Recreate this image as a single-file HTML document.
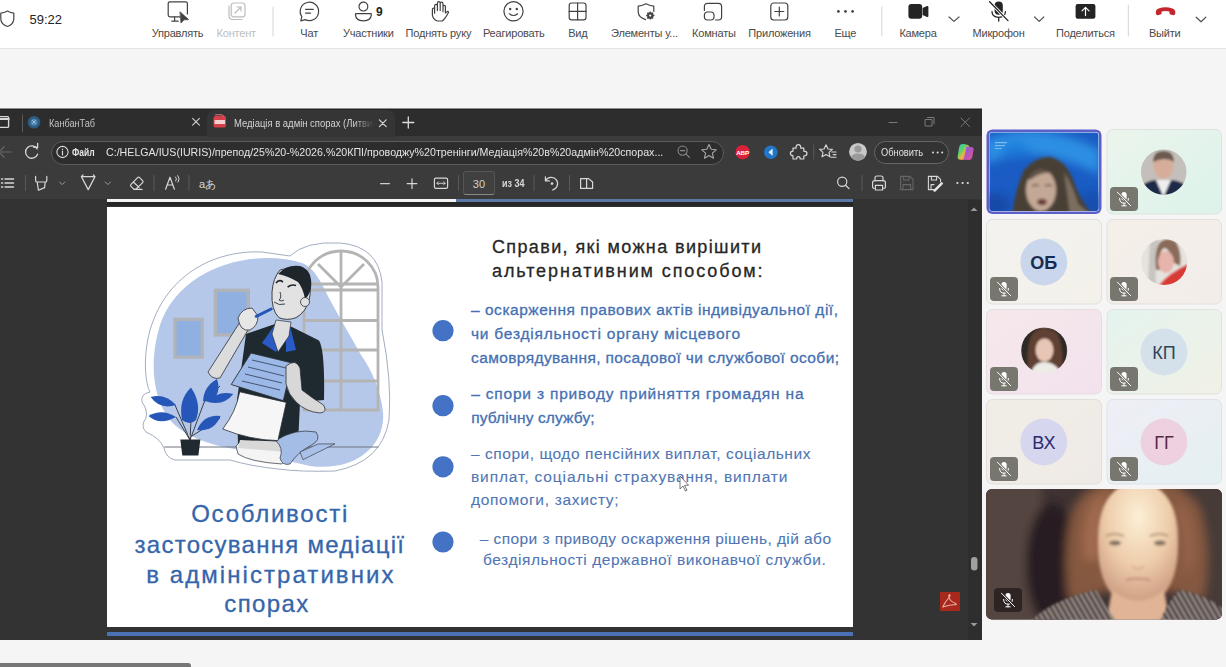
<!DOCTYPE html>
<html><head><meta charset="utf-8">
<style>
*{box-sizing:border-box}
html,body{margin:0;padding:0}
body{width:1226px;height:667px;overflow:hidden;background:#f5f5f5;position:relative;font-family:"Liberation Sans",sans-serif}
.a{position:absolute}
#top{left:0;top:0;width:1226px;height:49px;background:#fff;border-bottom:1px solid #e3e3e3}
.lbl{position:absolute;top:27px;width:120px;text-align:center;font-size:11px;letter-spacing:-0.2px;color:#4a4a4a;white-space:nowrap;line-height:13px}
.ico{position:absolute}
.sep{position:absolute;top:7px;width:1px;height:33px;background:#d6d6d6}
#win{left:0;top:108px;width:982px;height:532px;background:#333333;overflow:hidden}
#tabs{left:0;top:0;width:982px;height:28px;background:#2d2d2d}
#addr{left:0;top:28px;width:982px;height:31px;background:#3b3b3b}
#pdft{left:0;top:59px;width:982px;height:32px;background:#3b3b3b}
.wt{color:#e6e6e6}
#slide{left:107px;top:99px;width:746px;height:420px;background:#fff;overflow:hidden}
.tile{position:absolute;width:115px;height:85px;border-radius:6px;border:1px solid #e0e0e0;overflow:hidden}
.mic{position:absolute;left:3px;bottom:3px;width:28px;height:24px;border-radius:4px;background:#78786f}
.init{position:absolute;width:48px;height:48px;border-radius:50%;left:33px;top:18px;text-align:center;line-height:48px;font-size:19px;font-weight:bold}
</style></head>
<body>
<!-- TOP TEAMS BAR -->
<div id="top" class="a">
<svg class="a" style="left:0;top:0" width="1226" height="48" viewBox="0 0 1226 48" fill="none" stroke="#424242" stroke-width="1.2" stroke-linecap="round" stroke-linejoin="round">
 <!-- shield -->
 <path d="M7.5 11 Q4 13 0.8 13.2 V19 Q1 24.5 7.5 26.5 Q13.5 24.5 13.8 19 V13.2 Q10.5 13 7.5 11Z"/>
 <!-- manage: monitor + cursor -->
 <path d="M180 16.8 H170 Q168.2 16.8 168.2 15 V3.6 Q168.2 1.8 170 1.8 H185.6 Q187.4 1.8 187.4 3.6 V14"/>
 <path d="M174.6 17 V21 M171.8 21.2 H178.2"/>
 <path d="M180.2 12 L188.6 19.6 L184 19.8 L181.2 22.8 Z" fill="#424242" stroke-width="0.8"/>
 <!-- content (disabled) -->
 <g stroke="#bdbdbd">
 <rect x="231.2" y="3" width="13.8" height="13.8" rx="2.5"/>
 <path d="M229 6 V15.5 Q229 19.5 233 19.5 H242"/>
 <path d="M235 13 L241 7 M237 7 H241 V11"/>
 </g>
 <!-- separators -->
 <path d="M273 7 V36" stroke="#dcdcdc"/>
 <path d="M881.8 7 V36" stroke="#dcdcdc"/>
 <path d="M1128.4 5 V36" stroke="#dcdcdc"/>
 <!-- chat -->
 <path d="M300.8 20.8 L301.8 16.6 A9.2 9.2 0 1 1 305.2 19.6 Z"/>
 <path d="M305.6 9.4 H313.2 M305.6 13.2 H310.6"/>
 <!-- participants -->
 <circle cx="363.4" cy="6.6" r="4.4"/>
 <path d="M356 13.6 H370.8 Q371.4 13.6 371.4 14.4 Q371 20.8 363.4 20.8 Q355.8 20.8 355.4 14.4 Q355.4 13.6 356 13.6Z"/>
 <!-- hand -->
 <path d="M434.6 13.2 V6 Q434.6 4.4 436 4.4 Q437.4 4.4 437.4 6 V10.6 V3.2 Q437.4 1.6 438.8 1.6 Q440.2 1.6 440.2 3.2 V10.4 V3.8 Q440.2 2.2 441.6 2.2 Q443 2.2 443 3.8 V11.6 V6.8 Q443 5.4 444.2 5.4 Q445.4 5.4 445.4 6.8 V13 L447.2 11.6 Q448.4 11 448.6 12.2 Q445 19 442.2 21 H437.2 Q433 19.4 432.4 15.2 V9.6 Q432.4 8.2 433.5 8.2 Q434.6 8.2 434.6 9.6"/>
 <!-- smiley -->
 <circle cx="513.5" cy="11.3" r="9.6"/>
 <circle cx="510.2" cy="9" r="0.6" fill="#424242"/><circle cx="516.8" cy="9" r="0.6" fill="#424242"/>
 <path d="M509.4 13.8 Q513.5 17.2 517.6 13.8"/>
 <!-- view grid -->
 <rect x="569.2" y="3" width="16.8" height="16.8" rx="2.4"/>
 <path d="M577.6 3 V19.8 M569.2 11.4 H586"/>
 <!-- shield gear -->
 <path d="M646 3.8 Q641.5 6 638.2 6.2 V12 Q638.4 17.4 645.6 19.6 M653.8 11.5 V6.2 Q650.5 6 646 3.8"/>
 <path d="M654.20 15.60 L652.88 16.71 L653.03 18.43 L651.31 18.28 L650.20 19.60 L649.09 18.28 L647.37 18.43 L647.52 16.71 L646.20 15.60 L647.52 14.49 L647.37 12.77 L649.09 12.92 L650.20 11.60 L651.31 12.92 L653.03 12.77 L652.88 14.49Z" fill="#424242" stroke="#424242" stroke-width="0.6"/><circle cx="650.2" cy="15.6" r="1.1" fill="#fff" stroke="none"/>
 <!-- rooms -->
 <path d="M708.5 3.4 H718.4 Q721.6 3.4 721.6 6.6 V16.8 Q721.6 20 718.4 20 H715.6"/>
 <rect x="704.4" y="12" width="9.6" height="8" rx="3.2"/>
 <path d="M704.4 10.4 V6.6 Q704.4 3.4 707.6 3.4"/>
 <!-- apps -->
 <rect x="770.8" y="3" width="17" height="17" rx="3"/>
 <path d="M779.3 7 V16 M774.8 11.5 H783.8"/>
 <!-- more -->
 <circle cx="838.4" cy="11.4" r="1.35" fill="#424242" stroke="none"/><circle cx="845.5" cy="11.4" r="1.35" fill="#424242" stroke="none"/><circle cx="852.6" cy="11.4" r="1.35" fill="#424242" stroke="none"/>
 <!-- camera -->
 <rect x="908.4" y="4" width="13.8" height="14.8" rx="3" fill="#242424" stroke="none"/>
 <path d="M922.6 8 L927 6 Q928.4 5.6 928.4 7 V16 Q928.4 17.4 927 16.9 L922.6 15Z" fill="#242424" stroke="none"/>
 <path d="M949 17 L954 21.4 L959 17" stroke="#555"/>
 <!-- mic -->
 <rect x="994.6" y="1.4" width="8.2" height="13.4" rx="4.1" fill="#242424" stroke="none"/>
 <path d="M992 11.6 Q992 17.4 998.7 17.4 Q1005.4 17.4 1005.4 11.6 M998.7 17.4 V21" stroke="#242424" stroke-width="1.3"/>
 <path d="M989.6 1.8 L1008 20.6" stroke="#fff" stroke-width="3"/>
 <path d="M989.6 1.8 L1008 20.6" stroke="#242424" stroke-width="1.3"/>
 <path d="M1034.6 17 L1039.2 21.4 L1043.8 17" stroke="#555"/>
 <!-- share -->
 <rect x="1075.6" y="4" width="19.8" height="14.8" rx="2.2" fill="#242424" stroke="none"/>
 <path d="M1085.5 15.6 V7.6 M1082 10.8 L1085.5 7.3 L1089 10.8" stroke="#fff" stroke-width="1.2"/>
 <!-- hangup -->
 <path d="M1156 13.8 Q1155 10 1158.6 8.6 Q1165.5 6 1172.4 8.6 Q1176 10 1175.2 13.8 Q1174.8 15.4 1173.2 15.2 L1170.6 14.6 Q1169.4 14.2 1169.4 12.8 V11.4 Q1165.5 10.4 1161.6 11.4 V12.8 Q1161.6 14.2 1160.4 14.6 L1157.8 15.2 Q1156.2 15.4 1156 13.8Z" fill="#c4262e" stroke="none"/>
 <path d="M1196.2 17.2 L1201 21.8 L1205.8 17.2" stroke="#555"/>
</svg>
<div class="a" style="left:29.5px;top:12px;font-size:13px;color:#242424;line-height:15px">59:22</div>
<div class="a" style="left:376px;top:5px;font-size:12px;font-weight:bold;color:#242424;line-height:14px">9</div>
<div class="lbl" style="left:117.5px">Управлять</div>
<div class="lbl" style="left:176.3px;color:#bdbdbd">Контент</div>
<div class="lbl" style="left:249.2px">Чат</div>
<div class="lbl" style="left:308.3px">Участники</div>
<div class="lbl" style="left:378.4px">Поднять руку</div>
<div class="lbl" style="left:453.8px">Реагировать</div>
<div class="lbl" style="left:517.8px">Вид</div>
<div class="lbl" style="left:584.5px">Элементы у...</div>
<div class="lbl" style="left:653.9px">Комнаты</div>
<div class="lbl" style="left:719.5px">Приложения</div>
<div class="lbl" style="left:785.4px">Еще</div>
<div class="lbl" style="left:858px">Камера</div>
<div class="lbl" style="left:938.6px">Микрофон</div>
<div class="lbl" style="left:1025.4px">Поделиться</div>
<div class="lbl" style="left:1104.7px">Выйти</div>
</div>

<!-- BROWSER WINDOW -->
<div id="win" class="a">
  <div id="tabs" class="a"></div>
  <div class="a" style="left:0;top:0;width:982px;height:1px;background:#8c8c8c"></div>
  <div class="a" style="left:0;top:1px;width:982px;height:1px;background:#232323"></div>
  <div id="addr" class="a"></div>
  <div id="pdft" class="a"></div>
  <div class="a" style="left:207px;top:2px;width:188px;height:27px;background:#353535;border-radius:8px 8px 0 0"></div>
  <!-- address pill -->
  <div class="a" style="left:50.5px;top:32.5px;width:673px;height:24px;border:1px solid #5c5c5c;border-radius:12px;background:#2d2d2d"></div>
  <div class="a" style="left:873.5px;top:33.3px;width:75px;height:22.5px;border:1px solid #666;border-radius:12px;background:#333"></div>
  <!-- page number box -->
  <div class="a" style="left:463px;top:63px;width:32px;height:24px;background:#404040;border:1px solid #555;border-bottom:1px solid #8a8a8a;border-radius:3px"></div>
  <svg class="a" style="left:0;top:0" width="982" height="100" viewBox="0 0 982 100" fill="none" stroke="#d0d0d0" stroke-width="1.2" stroke-linecap="round" stroke-linejoin="round">
   <!-- tab actions -->
   <rect x="-1" y="8.6" width="9.6" height="10.8" rx="1.2" stroke="#d8d8d8" stroke-width="1.4"/>
   <path d="M-1 11 H8.6" stroke="#d8d8d8" stroke-width="2.2"/>
   <path d="M22.5 7 V24" stroke="#5a5a5a" stroke-width="1"/>
   <circle cx="34" cy="14.2" r="6.3" fill="#2f5b7e" stroke="none"/>
   <circle cx="34" cy="14.2" r="3.5" fill="#4c86b0" stroke="none"/>
   <path d="M32.5 12.5 L35.5 15.5 M35.5 12.5 L32.5 15.5" stroke="#aac4dc" stroke-width="0.9"/>
   <path d="M192.6 10.4 L199.4 17.2 M199.4 10.4 L192.6 17.2" stroke="#cfcfcf" stroke-width="1.1"/>
   <!-- pdf icon -->
   <rect x="213.5" y="8" width="12.5" height="11.5" rx="2" fill="#d6404a" stroke="none"/>
   <rect x="214.5" y="12" width="10.5" height="4" fill="#f4d0d2" stroke="none"/>
   <path d="M215.5 6.8 H222 L224 8.5" stroke="#e87880" stroke-width="1"/>
   <path d="M379.4 11.8 L386.2 18.6 M386.2 11.8 L379.4 18.6" stroke="#d8d8d8" stroke-width="1.2"/>
   <path d="M408.3 9 V20 M402.8 14.5 H413.8" stroke="#dcdcdc" stroke-width="1.3"/>
   <!-- window controls -->
   <path d="M889 14.5 H897" stroke="#7a7a7a" stroke-width="1"/>
   <rect x="925.5" y="11.5" width="6.5" height="6.5" stroke="#7a7a7a" stroke-width="1"/>
   <path d="M927.5 9.5 H934 V16" stroke="#7a7a7a" stroke-width="1"/>
   <path d="M961 10 L969.5 18.5 M969.5 10 L961 18.5" stroke="#7a7a7a" stroke-width="1"/>
   <!-- back / reload -->
   <path d="M1 44 H11 M-1 44 L4 39 M-1 44 L4 49" stroke="#6a6a6a" stroke-width="1.2"/>
   <path d="M37.2 41 A6.2 6.2 0 1 0 37.6 46.2" stroke="#d8d8d8" stroke-width="1.3"/>
   <path d="M33.6 39.2 L37.6 39.4 L37.6 35.4" stroke="#d8d8d8" stroke-width="1.3"/>
   <!-- info -->
   <circle cx="62.5" cy="44" r="5.6" stroke="#d8d8d8" stroke-width="1.1"/>
   <path d="M62.5 43 V47" stroke="#d8d8d8" stroke-width="1.2"/>
   <circle cx="62.5" cy="41.2" r="0.7" fill="#d8d8d8" stroke="none"/>
   <!-- zoom -->
   <circle cx="682.6" cy="42.6" r="4.6" stroke="#8a8a8a" stroke-width="1.1"/>
   <path d="M685.9 45.9 L689.4 49.4 M680.4 42.6 H684.8" stroke="#8a8a8a" stroke-width="1.1"/>
   <!-- star -->
   <path d="M709 36.6 L711.2 41.3 L716.2 41.8 L712.4 45.2 L713.5 50.2 L709 47.6 L704.5 50.2 L705.6 45.2 L701.8 41.8 L706.8 41.3Z" stroke="#a8a8a8" stroke-width="1.1"/>
   <!-- ABP -->
   <circle cx="742.7" cy="44.2" r="7.2" fill="#d9213b" stroke="none"/>
   <text x="742.7" y="46.6" font-size="6.2" font-weight="bold" fill="#fff" stroke="none" text-anchor="middle" font-family="Liberation Sans">ABP</text>
   <!-- blue ext -->
   <circle cx="770.8" cy="44.2" r="6.8" fill="#2276c8" stroke="none"/>
   <path d="M772.6 40.6 L768.4 44.2 L772.6 47.8Z" fill="#e8f2fc" stroke="none"/>
   <!-- puzzle -->
   <path d="M793 40.2 H796 Q796 36.6 798.4 36.6 Q800.8 36.6 800.8 40.2 H803.8 V43.2 Q807 43.2 807 45.6 Q807 48 803.8 48 V51 H800.2 Q800.2 48.6 798.4 48.6 Q796.6 48.6 796.6 51 H793 V47.6 Q790.4 47.6 790.4 45.4 Q790.4 43.2 793 43.2Z" stroke="#d8d8d8" stroke-width="1.2"/>
   <path d="M813.8 37 V51" stroke="#5a5a5a" stroke-width="1"/>
   <!-- fav list -->
   <path d="M826 36.8 L828 41 L832.4 41.4 L829 44.4 L830 48.8 L826 46.5 L822 48.8 L823 44.4 L819.6 41.4 L824 41Z" stroke="#d8d8d8" stroke-width="1.1"/>
   <path d="M831.8 44 H836 M833.2 46.6 H836 M831 49.2 H836" stroke="#d8d8d8" stroke-width="1.1"/>
   <!-- avatar -->
   <circle cx="858" cy="43.8" r="8.9" fill="#c9c9c9" stroke="none"/>
   <circle cx="858" cy="41" r="3.6" fill="#9a9a9a" stroke="none"/>
   <path d="M851 49.5 Q852 45.6 858 45.6 Q864 45.6 865 49.5 Q862 52.6 858 52.6 Q854 52.6 851 49.5Z" fill="#9a9a9a" stroke="none"/>
   <circle cx="933" cy="44.5" r="1" fill="#e0e0e0" stroke="none"/><circle cx="937.6" cy="44.5" r="1" fill="#e0e0e0" stroke="none"/><circle cx="942.2" cy="44.5" r="1" fill="#e0e0e0" stroke="none"/>
   <!-- copilot -->
   <defs><linearGradient id="cpg" x1="0" y1="0" x2="1" y2="1"><stop offset="0" stop-color="#3ec1f2"/><stop offset="0.35" stop-color="#55d36c"/><stop offset="0.6" stop-color="#f2b33d"/><stop offset="1" stop-color="#e040a0"/></linearGradient>
   <linearGradient id="cpg2" x1="0" y1="0" x2="1" y2="1"><stop offset="0" stop-color="#7a5cf0"/><stop offset="1" stop-color="#f0508a"/></linearGradient></defs>
   <path d="M960 37 Q962 35.6 964 36 L968 37 Q969.6 37.6 969 39.4 L965.4 50 Q964.6 52 962.6 52 L959 51.4 Q957 50.8 957.6 48.6 L959 40Z" fill="url(#cpg)" stroke="none"/>
   <path d="M966.6 38.4 L971.8 39 Q974 39.4 973.6 41.8 L972.2 49.6 Q971.6 52 969.4 52 L963.6 51.8Z" fill="url(#cpg2)" stroke="none"/>
   <!-- pdf toolbar icons row (cy 75) -->
   <path d="M1.6 71 H2.6 M1.6 75 H2.6 M1.6 79 H2.6" stroke="#d8d8d8" stroke-width="1.6"/>
   <path d="M5 71 H13.6 M5 75 H13.6 M5 79 H13.6" stroke="#d8d8d8" stroke-width="1.3"/>
   <path d="M25.4 67.5 V82.5" stroke="#5a5a5a" stroke-width="1"/>
   <path d="M35.6 68.4 V72.4 Q35.6 74 37.2 74 H45.2 Q46.8 74 46.8 72.4 V68.4 M37.2 74 L38.4 82.2 L44.6 79.6 L45.2 74" stroke="#d8d8d8" stroke-width="1.2"/>
   <path d="M59.6 74 L62.2 76.6 L64.8 74" stroke="#9a9a9a" stroke-width="1"/>
   <path d="M81.4 68.6 H95 L88.2 81.6Z M81.4 68.6 L83 66.8 M95 68.6 L93.4 66.8" stroke="#d8d8d8" stroke-width="1.2"/>
   <path d="M105.2 74 L107.8 76.6 L110.4 74" stroke="#9a9a9a" stroke-width="1"/>
   <path d="M131 76.4 L137.6 69.6 Q138.6 68.6 139.6 69.6 L142.6 72.6 Q143.6 73.6 142.6 74.6 L136 81.2 H133.8 L131 78.4 Q130 77.4 131 76.4Z M133.4 74 L139 79.4 M133.8 81.4 H142" stroke="#d8d8d8" stroke-width="1.2"/>
   <path d="M154 67.5 V82.5" stroke="#5a5a5a" stroke-width="1"/>
   <path d="M165.6 81.2 L170 69.2 L174.4 81.2 M167.2 77 H172.8" stroke="#d8d8d8" stroke-width="1.2"/>
   <path d="M175.6 69 Q177.4 70.6 175.8 73 M177.8 67.6 Q180.6 70.6 178 74.2" stroke="#d8d8d8" stroke-width="1"/>
   <path d="M189 67.5 V82.5" stroke="#5a5a5a" stroke-width="1"/>
   <text x="199" y="79.6" font-size="11" fill="#d8d8d8" stroke="none" font-family="Liberation Sans">aあ</text>
   <!-- zoom controls -->
   <path d="M380.6 75.6 H389.4" stroke="#cfcfcf" stroke-width="1.2"/>
   <path d="M412 70.8 V80.4 M407.2 75.6 H416.8" stroke="#d8d8d8" stroke-width="1.2"/>
   <rect x="434.4" y="70.2" width="13.2" height="10.2" rx="1.6" stroke="#d8d8d8" stroke-width="1.2"/>
   <path d="M437 75.3 H445 M438.4 73.8 L437 75.3 L438.4 76.8 M443.6 73.8 L445 75.3 L443.6 76.8" stroke="#d8d8d8" stroke-width="0.9"/>
   <path d="M458.6 67.5 V82.5" stroke="#5a5a5a" stroke-width="1"/>
   <path d="M534 67.5 V82.5" stroke="#5a5a5a" stroke-width="1"/>
   <path d="M545.6 72.6 A6.4 6.4 0 1 1 552.4 82" stroke="#d8d8d8" stroke-width="1.2"/>
   <path d="M545.4 68.8 V72.8 H549.4" stroke="#d8d8d8" stroke-width="1.2"/>
   <circle cx="552" cy="75.6" r="1.3" fill="#d8d8d8" stroke="none"/>
   <path d="M569.5 67.5 V82.5" stroke="#5a5a5a" stroke-width="1"/>
   <path d="M580.6 70.6 H588.6 L592.6 74 V80.4 H580.6Z M586.6 70.6 V80.4" stroke="#d8d8d8" stroke-width="1.2"/>
   <!-- right pdf icons -->
   <circle cx="842.2" cy="73.8" r="4.6" stroke="#d8d8d8" stroke-width="1.2"/>
   <path d="M845.6 77.2 L849 80.6" stroke="#d8d8d8" stroke-width="1.3"/>
   <path d="M862 67.5 V82.5" stroke="#5a5a5a" stroke-width="1"/>
   <path d="M875 73 V70 Q875 68 877 68 H881 Q883 68 883 70 V73 M874 80.4 Q872.6 80.4 872.6 79 V74.6 Q872.6 72.6 874.6 72.6 H883.4 Q885.4 72.6 885.4 74.6 V79 Q885.4 80.4 884 80.4 M875.4 77.4 H882.6 V82 H875.4Z" stroke="#d8d8d8" stroke-width="1.2"/>
   <path d="M900.6 68.4 H910 L913 71.4 V81.6 H900.6Z M903.6 68.4 V72 H909 V68.4 M903 81.6 V76.6 H910.6 V81.6" stroke="#666" stroke-width="1.1"/>
   <path d="M936 81.6 H928.4 V68.4 H937.6 L940.6 71.4 V74 M931.4 68.4 V72 H936.6 V68.4 M931 81.6 V76.6 H934" stroke="#d8d8d8" stroke-width="1.1"/>
   <path d="M934.6 82.6 L941.8 75.4" stroke="#e8e8e8" stroke-width="2.4"/>
   <circle cx="957.4" cy="75" r="1.1" fill="#e0e0e0" stroke="none"/><circle cx="962.6" cy="75" r="1.1" fill="#e0e0e0" stroke="none"/><circle cx="967.8" cy="75" r="1.1" fill="#e0e0e0" stroke="none"/>
  </svg>
  <div class="a wt" style="left:48.5px;top:8.5px;font-size:11px;line-height:13px;color:#c4c4c4;transform:scaleX(0.83);transform-origin:0 0;white-space:nowrap">КанбанТаб</div>
  <div class="a wt" style="left:234px;top:8.5px;width:163px;font-size:11px;line-height:13px;color:#d4d4d4;transform:scaleX(0.86);transform-origin:0 0;white-space:nowrap;overflow:hidden;-webkit-mask-image:linear-gradient(90deg,#000 85%,transparent)">Медіація в адмін спорах (Литвин</div>
  <div class="a" style="left:72px;top:38.5px;font-size:10px;font-weight:bold;line-height:12px;color:#e2e2e2;transform:scaleX(0.85);transform-origin:0 0;white-space:nowrap">Файл</div>
  <div class="a" style="left:106px;top:38px;font-size:11px;line-height:13px;color:#e4e4e4;transform:scaleX(0.968);transform-origin:0 0;white-space:nowrap">C:/HELGA/IUS(IURIS)/препод/25%20-%2026.%20КПІ/проводжу%20тренінги/Медіація%20в%20адмін%20спорах...</div>
  <div class="a" style="left:881.4px;top:38.5px;font-size:10px;line-height:12px;color:#e0e0e0;transform:scaleX(0.93);transform-origin:0 0;white-space:nowrap">Обновить</div>
  <div class="a" style="left:472.8px;top:70px;font-size:11px;line-height:13px;color:#cfcfcf;white-space:nowrap">30</div>
  <div class="a" style="left:501.7px;top:70px;font-size:10px;font-weight:bold;line-height:12px;color:#d8d8d8;transform:scaleX(0.9);transform-origin:0 0;white-space:nowrap">из 34</div>
  <div class="a" style="left:107px;top:91px;width:349px;height:3px;background:#f4f4f4"></div>
  <div class="a" style="left:456px;top:91px;width:397px;height:3px;background:#5b78a8"></div>
  <div class="a" style="left:107px;top:94px;width:746px;height:4px;background:#262626"></div>
  <div class="a" style="left:107px;top:524px;width:746px;height:4px;background:#4a72b4"></div>
  <!-- scrollbar -->
  <svg class="a" style="left:960px;top:92px" width="22" height="440" viewBox="0 0 22 440"><rect x="8" y="0" width="14" height="440" fill="#2e2e2e"/>
   <path d="M10.5 11 L14 7.5 L17.5 11Z" fill="#9a9a9a"/>
   <path d="M10.5 423 L14 426.5 L17.5 423Z" fill="#9a9a9a"/>
   <rect x="11" y="357" width="6.5" height="13.5" rx="3.2" fill="#a0a0a0"/>
  </svg>
  <!-- acrobat badge -->
  <div class="a" style="left:939.5px;top:483.7px;width:20px;height:19px;background:#a8281c;border-radius:1px"></div>
  <svg class="a" style="left:939px;top:483px" width="21" height="20" viewBox="0 0 21 20"><path d="M4 15.5 Q6 11 10.5 6 Q11.6 4.2 10.8 3.6 Q9.6 3.4 9.8 6 Q10.6 10 16.8 12.6 Q18 13.6 16.6 13.8 Q12 13.2 4.6 15.8 Q3.4 16.6 4 15.5Z" fill="none" stroke="#e8b0a8" stroke-width="1.1"/></svg>
  <svg id="slide" class="a" width="746" height="420" viewBox="107 207 746 420" style="background:#fff">
   <!-- sticker outline -->
   <path d="M262 252 C220 250 168 270 150 330 C142 360 146 385 150 392 Q140 394 142 402 Q148 410 146 418 Q140 426 146 432 Q160 438 164 448 Q166 458 175 460 L230 460 Q250 466 278 469 Q300 472 335 471 Q382 462 389 420 Q392 380 382 330 L382 282 Q378 246 340 243 Q305 241 290 256 Z" fill="#fff" stroke="#8a98b0" stroke-width="0.8"/>
   <!-- blob -->
   <path d="M302 263 C255 248 180 266 160 325 C148 365 154 400 170 420 C185 438 215 446 240 450 L310 466 C355 472 386 446 383 412 C381 392 372 370 361 355 C350 335 338 315 330 300 C322 284 315 268 302 263 Z" fill="#b5c8e9"/>
   <!-- frames -->
   <rect x="213.7" y="288.6" width="36.3" height="48" fill="#b0b3b8"/>
   <rect x="217" y="292" width="29.6" height="41" fill="#90b0e2"/>
   <rect x="173.3" y="317.7" width="30.5" height="41" fill="#b0b3b8"/>
   <rect x="176.6" y="321" width="24" height="34.5" fill="#90b0e2"/>
   <!-- window -->
   <g fill="none" stroke="#b4b4b4" stroke-width="2.8">
    <path d="M304 410 V287 A37 36 0 0 1 378 287 V410 Z"/>
    <path d="M341 251 V410 M304 284 H378 M304 290 H378 M304 320.5 H378 M304 350 H378 M304 381 H378 M341 287 L318 264 M341 287 L364 264"/>
   </g>
   <!-- floor line -->
   <path d="M164.4 447 H378.6" stroke="#6d7580" stroke-width="1"/>
   <!-- plant -->
   <path d="M190 440 L175 405 M190 440 L176 417 M190 440 L191 420 M190 440 L205 400 L220 386 M205 400 L230 395 M192 436 L220 418" stroke="#2a2f36" stroke-width="0.9" fill="none"/>
   <g fill="#2656b8">
    <path d="M176 405 Q165 393 150.6 397 Q160 410 176 405Z"/>
    <path d="M176 417 Q162 408 148.5 416 Q160 426 176 417Z"/>
    <path d="M182 420 Q178 400 191 387.6 Q202 404 196 420 Q190 426 182 420Z"/>
    <path d="M203 401 Q204 386 217 379 Q222 394 210 402Z"/>
    <path d="M208 402 Q218 390 233.3 394 Q224 406 208 402Z"/>
    <path d="M197 430 Q204 414 220.6 416 Q214 432 197 430Z"/>
   </g>
   <path d="M180.3 439.5 H200.4 L198.4 455.4 H182.3 Z" fill="#222a31"/>
   <!-- shirt -->
   <path d="M246 334 L275 324 L292 327 L319 340.5 Q325 350 324 400 L300 402 L298 445 L238 445 L237 400 Z" fill="#1f2930"/>
   <!-- collar & neck -->
   <path d="M274.8 324.8 L262 343 L276 352 L282 340 Z" fill="#2a5ac6"/>
   <path d="M290.5 327.6 L296 350 L286 352 L286 336 Z" fill="#2a5ac6"/>
   <path d="M276 320 L291 322 L289 336 L278 352 L272 334 Z" fill="#dedede" stroke="#2b3036" stroke-width="0.7"/>
   <!-- head -->
   <path d="M280 270 Q296 264 308 276 Q312 290 309 300 Q306 312 296 317.7 Q287 321 279 317.7 Q271 310 272 292 Q273 278 280 270Z" fill="#e2e2e2" stroke="#2b3036" stroke-width="0.9"/>
   <path d="M278 274 Q287 264 300 266 Q313 270 311 288 Q309 296 305 299 Q303 288 298 282 Q288 276 278 274Z" fill="#1e262c"/>
   <circle cx="305" cy="302" r="4.5" fill="#e2e2e2" stroke="#2b3036" stroke-width="0.8"/>
   <path d="M276 283 Q279 279 283 282 M287.6 287 Q292 284 296 285.6" stroke="#1e262c" stroke-width="1.6" fill="none"/>
   <path d="M280 292 Q282 298 279 300 Q282 302 284 300 M274 302 Q279 306 285 304" stroke="#2b3036" stroke-width="0.9" fill="none"/>
   <!-- raised arm + hand + pen -->
   <path d="M208 372 Q212 380 220 378 L248 330 L240 322 Z" fill="#dcdcdc" stroke="#2b3036" stroke-width="0.8"/>
   <path d="M238 318 Q242 308 252 308 L258 316 Q258 326 250 330 Q240 332 238 318Z" fill="#e6e6e6" stroke="#2b3036" stroke-width="0.8"/>
   <path d="M256.3 316.3 L271.2 309" stroke="#2456b8" stroke-width="3" stroke-linecap="round"/>
   <!-- papers bottom -->
   <path d="M236 446 L238 454 Q250 462 282 464 L286 452 Q262 446 240 442Z" fill="#f4f4f4" stroke="#2b3036" stroke-width="0.7"/>
   <path d="M240 440 L290 442 L286 452 L238 448Z" fill="#d8d8d8"/>
   <path d="M275.7 440.6 Q295 428 316 432 Q322 440 310 446 Q298 452 290 464 Q282 466 280 458 Q284 448 275.7 440.6Z" fill="#a4bde6" stroke="#2b3036" stroke-width="0.7"/>
   <path d="M303 459.7 L335 443.8 L318 444 L300 452Z" fill="#a9c0e8" stroke="#2b3036" stroke-width="0.6"/>
   <!-- hanging paper -->
   <path d="M239.7 391.8 L286.3 402.4 L277.9 440.6 Q250 440 222.7 429 Q236 412 239.7 391.8Z" fill="#f6f6f6" stroke="#2b3036" stroke-width="0.8"/>
   <!-- clipboard -->
   <path d="M251 353 L292.3 363 L283.3 400.7 L231.2 384.5 Z" fill="#9cb8e6" stroke="#2b3036" stroke-width="0.9"/>
   <path d="M252 360 L286 368 M248 367 L284 376 M245 374 L282 383 M242 381 L280 390" stroke="#3a4a66" stroke-width="0.9"/>
   <!-- right hand & forearm -->
   <path d="M286 366 Q296 358 300 368 L302 390 Q312 398 323.5 405 Q328 412 320 413 Q306 412 296 402 Q288 394 286 384 Z" fill="#d8d8d8" stroke="#2b3036" stroke-width="0.8"/>
   <!-- TEXT -->
   <g font-family="Liberation Sans" fill="#262626" stroke="#262626" stroke-width="0.3" font-size="18">
    <text x="492" y="253" textLength="269" lengthAdjust="spacing">Справи, які можна вирішити</text>
    <text x="492" y="276.5" textLength="270.6" lengthAdjust="spacing">альтернативним способом:</text>
   </g>
   <g fill="#4472c4">
    <circle cx="443" cy="330.7" r="10.6"/><circle cx="443" cy="405.7" r="10.6"/><circle cx="443" cy="466.8" r="10.6"/><circle cx="443" cy="542" r="10.6"/>
   </g>
   <g font-family="Liberation Sans" fill="#4570b2" stroke="#4570b2" stroke-width="0.3" font-size="15.5">
    <text x="471" y="315.1" textLength="367" lengthAdjust="spacing">– оскарження правових актів індивідуальної дії,</text>
    <text x="471" y="339" textLength="269" lengthAdjust="spacing">чи бездіяльності органу місцевого</text>
    <text x="471" y="363.2" textLength="368" lengthAdjust="spacing">самоврядування, посадової чи службової особи;</text>
    <text x="471.2" y="398.8" textLength="332.3" lengthAdjust="spacing">– спори з приводу прийняття громадян на</text>
    <text x="471.2" y="422.8" textLength="123.4" lengthAdjust="spacing">публічну службу;</text>
   </g>
   <g font-family="Liberation Sans" fill="#4f76b4" stroke="#4f76b4" stroke-width="0.1" font-size="15.5">
    <text x="471" y="458.8" textLength="339.4" lengthAdjust="spacing">– спори, щодо пенсійних виплат, соціальних</text>
    <text x="471" y="482" textLength="316.5" lengthAdjust="spacing">виплат, соціальні страхування, виплати</text>
    <text x="471" y="505" textLength="147.6" lengthAdjust="spacing">допомоги, захисту;</text>
    <text x="479.8" y="544" textLength="351.2" lengthAdjust="spacing">– спори з приводу оскарження рішень, дій або</text>
    <text x="483" y="564.7" textLength="342.8" lengthAdjust="spacing">бездіяльності державної виконавчої служби.</text>
   </g>
   <g font-family="Liberation Sans" fill="#3565aa" stroke="#3565aa" stroke-width="0.3" font-size="24">
    <text x="191.2" y="521.5" textLength="156.1" lengthAdjust="spacing">Особливості</text>
    <text x="134.5" y="553" textLength="269.5" lengthAdjust="spacing">застосування медіації</text>
    <text x="146.3" y="582.5" textLength="247.1" lengthAdjust="spacing">в адміністративних</text>
    <text x="224.3" y="612" textLength="84" lengthAdjust="spacing">спорах</text>
   </g>
   <!-- cursor -->
   <path d="M680 476 L680 489 L683 486 L685.5 491 L687 490.3 L684.6 485.4 L688.6 485.2 Z" fill="#fff" stroke="#555" stroke-width="0.8"/>
  </svg>
</div>

<!-- PARTICIPANTS -->
<svg class="a" style="left:984px;top:126px" width="242" height="497" viewBox="984 126 242 497">
  <defs>
   <linearGradient id="gB" x1="0" y1="0" x2="1" y2="1"><stop offset="0" stop-color="#ebf4ec"/><stop offset="1" stop-color="#dcf3ea"/></linearGradient>
   <linearGradient id="gC" x1="0" y1="0" x2="1" y2="1"><stop offset="0" stop-color="#f3f2ef"/><stop offset="1" stop-color="#f4f1ea"/></linearGradient>
   <linearGradient id="gD" x1="0" y1="0" x2="1" y2="1"><stop offset="0" stop-color="#f4efe8"/><stop offset="1" stop-color="#f2ede9"/></linearGradient>
   <linearGradient id="gE" x1="0" y1="0" x2="1" y2="1"><stop offset="0" stop-color="#f5e8ea"/><stop offset="1" stop-color="#f3e2ee"/></linearGradient>
   <linearGradient id="gF" x1="0" y1="0" x2="1" y2="1"><stop offset="0" stop-color="#e4f3ee"/><stop offset="1" stop-color="#f1f1e6"/></linearGradient>
   <linearGradient id="gG" x1="0" y1="0" x2="1" y2="1"><stop offset="0" stop-color="#f1ede6"/><stop offset="1" stop-color="#efeae6"/></linearGradient>
   <linearGradient id="gH" x1="0" y1="0" x2="1" y2="1"><stop offset="0" stop-color="#efeef6"/><stop offset="1" stop-color="#e4f0f2"/></linearGradient>
   <radialGradient id="sky" cx="0.55" cy="0.45" r="0.7"><stop offset="0" stop-color="#2a9ae0"/><stop offset="0.5" stop-color="#1a6ccc"/><stop offset="1" stop-color="#0f3f9a"/></radialGradient>
   <linearGradient id="band" x1="0" y1="0" x2="1" y2="1"><stop offset="0" stop-color="#2ab0f0" stop-opacity="0"/><stop offset="0.5" stop-color="#38b8f4" stop-opacity="0.6"/><stop offset="1" stop-color="#2ab0f0" stop-opacity="0"/></linearGradient>
   <radialGradient id="bg2" cx="0.5" cy="0.5" r="0.8"><stop offset="0" stop-color="#2e2428"/><stop offset="1" stop-color="#4a3c3a"/></radialGradient>
   <radialGradient id="face2" cx="0.5" cy="0.3" r="0.65"><stop offset="0" stop-color="#fcefd6"/><stop offset="0.6" stop-color="#eecdaa"/><stop offset="1" stop-color="#d2a488"/></radialGradient>
   <radialGradient id="hair2" cx="0.5" cy="0.4" r="0.6"><stop offset="0" stop-color="#c07a50"/><stop offset="1" stop-color="#7a4a34"/></radialGradient>
   <pattern id="zebra" width="5" height="5" patternUnits="userSpaceOnUse" patternTransform="rotate(-30)"><rect width="5" height="5" fill="#9a8c88"/><rect width="2.2" height="5" fill="#2e2626"/></pattern>
   <filter id="bl1" x="-20%" y="-20%" width="140%" height="140%"><feGaussianBlur stdDeviation="0.9"/></filter><filter id="bl2" x="-20%" y="-20%" width="140%" height="140%"><feGaussianBlur stdDeviation="1.6"/></filter><filter id="bl3" x="-20%" y="-20%" width="140%" height="140%"><feGaussianBlur stdDeviation="5"/></filter>
   <clipPath id="cA"><rect x="989.5" y="132.5" width="109" height="78.5" rx="3"/></clipPath>
   <clipPath id="cBig"><rect x="986" y="489" width="236" height="130.5" rx="6"/></clipPath>
   <clipPath id="av1"><circle cx="1163.7" cy="172" r="22.8"/></clipPath>
   <clipPath id="av2"><circle cx="1164.2" cy="262" r="23"/></clipPath>
   <clipPath id="av3"><circle cx="1044.2" cy="350.6" r="23"/></clipPath>
  </defs>
  <!-- Tile A video -->
  <rect x="986.5" y="129.5" width="115" height="84.5" rx="6" fill="#5b5fc7"/>
  <rect x="989" y="132" width="110" height="79.5" rx="3.5" fill="#fff"/>
  <g clip-path="url(#cA)">
   <rect x="989" y="132" width="110" height="80" fill="#1a5cc4"/>
   <g filter="url(#bl3)">
    <path d="M985 165 Q1030 140 1100 175 L1100 150 Q1040 118 985 140Z" fill="#30a0ec" opacity="0.75"/>
    <ellipse cx="1015" cy="150" rx="14" ry="8" fill="#1a78d8" opacity="0.8"/>
    <ellipse cx="1092" cy="205" rx="16" ry="14" fill="#1450b0"/>
    <ellipse cx="995" cy="205" rx="16" ry="12" fill="#154aa8"/>
   </g>
   <g filter="url(#bl2)">
   <path d="M1012 214 Q1016 186 1024 170 Q1036 156 1050 157 Q1066 160 1074 182 Q1080 200 1092 214Z" fill="#4a4036"/>
   <path d="M1064 172 Q1074 188 1078 204 L1090 214 L1070 214Z" fill="#7c6e5e"/>
   <ellipse cx="1041" cy="190" rx="15" ry="21" fill="#c4a896"/>
   <path d="M1027 178 Q1030 164 1042 163 Q1054 164 1057 176 Q1046 168 1030 180Z" fill="#4a3e34" opacity="0.8"/>
   <ellipse cx="1042" cy="202" rx="5" ry="3.2" fill="#6a3a34"/>
   <path d="M1032 186 Q1036 184 1039 186 M1045 186 Q1049 184 1052 186" stroke="#5a4a40" stroke-width="1.4" fill="none"/>
   </g>
   <rect x="995" y="142" width="12" height="1.2" fill="#cfe6ff" opacity="0.55"/><rect x="995" y="145" width="10" height="1.2" fill="#cfe6ff" opacity="0.5"/><rect x="995" y="148" width="7" height="1.1" fill="#cfe6ff" opacity="0.45"/>
  </g>
  <!-- Tile B -->
  <rect x="1107" y="129.5" width="114.5" height="84.5" rx="6" fill="url(#gB)" stroke="#dfe3df" stroke-width="1"/>
  <g clip-path="url(#av1)"><g filter="url(#bl1)">
   <rect x="1140" y="149" width="48" height="48" fill="#c4bfba"/>
   <path d="M1138 188 Q1148 180 1156 180 L1171 180 Q1180 180 1190 188 V197 H1138Z" fill="#1f2b48"/>
   <path d="M1156 180 L1163.5 197 L1171 180Z" fill="#eeeeee"/>
   <ellipse cx="1163.5" cy="166" rx="10" ry="13" fill="#d6ad9a"/>
   <path d="M1153 162 Q1153 151 1163.5 151 Q1174 151 1174 162 Q1166 156 1153 162Z" fill="#6a5a50"/>
  </g></g>
  <rect x="1110" y="187" width="28" height="24" rx="4" fill="#77776f"/>
   <g transform="translate(1124,199)" fill="none" stroke="#fff" stroke-linecap="round">
    <rect x="-2.6" y="-7" width="5.2" height="8.4" rx="2.6" fill="#fff" stroke="none"/>
    <path d="M-4.4 -0.6 Q-4.4 4.2 0 4.2 Q4.4 4.2 4.4 -0.6 M0 4.2 V6.8 M-2.2 6.8 H2.2" stroke-width="1"/>
    <path d="M-6.6 -6.8 L6.6 6.6" stroke="#77776f" stroke-width="2.6"/>
    <path d="M-6.6 -6.8 L6.6 6.6" stroke-width="1"/>
   </g>
  <!-- Tile C -->
  <rect x="986.5" y="219.5" width="115" height="84.5" rx="6" fill="url(#gC)" stroke="#e2e0dc" stroke-width="1"/>
  <circle cx="1043.8" cy="262" r="23.4" fill="#c9d6ec"/>
  <text x="1043.8" y="268.7" font-family="Liberation Sans" font-weight="bold" font-size="18" fill="#172a52" text-anchor="middle">ОБ</text>
  <rect x="990" y="277" width="28" height="24" rx="4" fill="#77776f"/>
   <g transform="translate(1004,289)" fill="none" stroke="#fff" stroke-linecap="round">
    <rect x="-2.6" y="-7" width="5.2" height="8.4" rx="2.6" fill="#fff" stroke="none"/>
    <path d="M-4.4 -0.6 Q-4.4 4.2 0 4.2 Q4.4 4.2 4.4 -0.6 M0 4.2 V6.8 M-2.2 6.8 H2.2" stroke-width="1"/>
    <path d="M-6.6 -6.8 L6.6 6.6" stroke="#77776f" stroke-width="2.6"/>
    <path d="M-6.6 -6.8 L6.6 6.6" stroke-width="1"/>
   </g>
  <!-- Tile D -->
  <rect x="1107" y="219.5" width="114.5" height="84.5" rx="6" fill="url(#gD)" stroke="#e4e0dc" stroke-width="1"/>
  <g clip-path="url(#av2)"><g filter="url(#bl1)">
   <rect x="1140" y="238" width="48" height="48" fill="#e6e2de"/>
   <path d="M1150 238 L1160 238 Q1154 250 1156 286 H1148Z" fill="#c8c4c0"/>
   <path d="M1156 270 Q1154 250 1160 242 Q1168 236 1176 242 Q1182 252 1180 266 L1172 262 Q1170 248 1164 248 Q1158 252 1160 270Z" fill="#8a6a58"/>
   <ellipse cx="1166" cy="262" rx="8" ry="11" fill="#e6b4aa"/>
   <path d="M1158 286 Q1170 272 1188 264 V286Z" fill="#d83a34"/>
   <path d="M1140 274 Q1148 278 1152 286 H1140Z" fill="#e48a8a" opacity="0.7"/>
  </g></g>
  <rect x="1110" y="277" width="28" height="24" rx="4" fill="#77776f"/>
   <g transform="translate(1124,289)" fill="none" stroke="#fff" stroke-linecap="round">
    <rect x="-2.6" y="-7" width="5.2" height="8.4" rx="2.6" fill="#fff" stroke="none"/>
    <path d="M-4.4 -0.6 Q-4.4 4.2 0 4.2 Q4.4 4.2 4.4 -0.6 M0 4.2 V6.8 M-2.2 6.8 H2.2" stroke-width="1"/>
    <path d="M-6.6 -6.8 L6.6 6.6" stroke="#77776f" stroke-width="2.6"/>
    <path d="M-6.6 -6.8 L6.6 6.6" stroke-width="1"/>
   </g>
  <!-- Tile E -->
  <rect x="986.5" y="309.5" width="115" height="84.5" rx="6" fill="url(#gE)" stroke="#e6dde0" stroke-width="1"/>
  <g clip-path="url(#av3)"><g filter="url(#bl1)">
   <rect x="1020" y="327" width="48" height="48" fill="#2e2a28"/>
   <path d="M1028 375 Q1026 340 1034 332 Q1044 324 1056 332 Q1064 342 1062 375Z" fill="#5e4030"/>
   <ellipse cx="1044.5" cy="350" rx="9" ry="11.5" fill="#e8c6b6"/>
   <path d="M1030 375 Q1034 362 1044 362 Q1056 362 1062 375Z" fill="#ecebe6"/>
  </g></g>
  <rect x="990" y="367" width="28" height="24" rx="4" fill="#77776f"/>
   <g transform="translate(1004,379)" fill="none" stroke="#fff" stroke-linecap="round">
    <rect x="-2.6" y="-7" width="5.2" height="8.4" rx="2.6" fill="#fff" stroke="none"/>
    <path d="M-4.4 -0.6 Q-4.4 4.2 0 4.2 Q4.4 4.2 4.4 -0.6 M0 4.2 V6.8 M-2.2 6.8 H2.2" stroke-width="1"/>
    <path d="M-6.6 -6.8 L6.6 6.6" stroke="#77776f" stroke-width="2.6"/>
    <path d="M-6.6 -6.8 L6.6 6.6" stroke-width="1"/>
   </g>
  <!-- Tile F -->
  <rect x="1107" y="309.5" width="114.5" height="84.5" rx="6" fill="url(#gF)" stroke="#dfe4e0" stroke-width="1"/>
  <circle cx="1164" cy="352" r="23.4" fill="#d5e1ea"/>
  <text x="1164" y="358.7" font-family="Liberation Sans" font-size="18" fill="#2f4455" text-anchor="middle">КП</text>
  <rect x="1110" y="367" width="28" height="24" rx="4" fill="#77776f"/>
   <g transform="translate(1124,379)" fill="none" stroke="#fff" stroke-linecap="round">
    <rect x="-2.6" y="-7" width="5.2" height="8.4" rx="2.6" fill="#fff" stroke="none"/>
    <path d="M-4.4 -0.6 Q-4.4 4.2 0 4.2 Q4.4 4.2 4.4 -0.6 M0 4.2 V6.8 M-2.2 6.8 H2.2" stroke-width="1"/>
    <path d="M-6.6 -6.8 L6.6 6.6" stroke="#77776f" stroke-width="2.6"/>
    <path d="M-6.6 -6.8 L6.6 6.6" stroke-width="1"/>
   </g>
  <!-- Tile G -->
  <rect x="986.5" y="399.5" width="115" height="84.5" rx="6" fill="url(#gG)" stroke="#e2dfda" stroke-width="1"/>
  <circle cx="1043.8" cy="442" r="23.4" fill="#d6d6ef"/>
  <text x="1043.8" y="448.7" font-family="Liberation Sans" font-size="18" fill="#2a2b6a" text-anchor="middle">ВХ</text>
  <rect x="990" y="457" width="28" height="24" rx="4" fill="#77776f"/>
   <g transform="translate(1004,469)" fill="none" stroke="#fff" stroke-linecap="round">
    <rect x="-2.6" y="-7" width="5.2" height="8.4" rx="2.6" fill="#fff" stroke="none"/>
    <path d="M-4.4 -0.6 Q-4.4 4.2 0 4.2 Q4.4 4.2 4.4 -0.6 M0 4.2 V6.8 M-2.2 6.8 H2.2" stroke-width="1"/>
    <path d="M-6.6 -6.8 L6.6 6.6" stroke="#77776f" stroke-width="2.6"/>
    <path d="M-6.6 -6.8 L6.6 6.6" stroke-width="1"/>
   </g>
  <!-- Tile H -->
  <rect x="1107" y="399.5" width="114.5" height="84.5" rx="6" fill="url(#gH)" stroke="#dfe2e8" stroke-width="1"/>
  <circle cx="1164" cy="442" r="23.4" fill="#edd1e0"/>
  <text x="1164" y="448.7" font-family="Liberation Sans" font-size="18" fill="#5a2843" text-anchor="middle">ГГ</text>
  <rect x="1110" y="457" width="28" height="24" rx="4" fill="#77776f"/>
   <g transform="translate(1124,469)" fill="none" stroke="#fff" stroke-linecap="round">
    <rect x="-2.6" y="-7" width="5.2" height="8.4" rx="2.6" fill="#fff" stroke="none"/>
    <path d="M-4.4 -0.6 Q-4.4 4.2 0 4.2 Q4.4 4.2 4.4 -0.6 M0 4.2 V6.8 M-2.2 6.8 H2.2" stroke-width="1"/>
    <path d="M-6.6 -6.8 L6.6 6.6" stroke="#77776f" stroke-width="2.6"/>
    <path d="M-6.6 -6.8 L6.6 6.6" stroke-width="1"/>
   </g>
  <!-- Big tile -->
  <g clip-path="url(#cBig)">
   <rect x="986" y="489" width="236" height="131" fill="#3e3232"/>
   <g filter="url(#bl3)">
   <rect x="980" y="480" width="62" height="150" fill="#54443f"/>
   <ellipse cx="1052" cy="565" rx="26" ry="62" fill="#261e22"/>
   <rect x="1195" y="480" width="40" height="150" fill="#463a38"/>
   <path d="M1068 598 Q1062 540 1074 506 Q1090 478 1138 476 Q1186 478 1200 510 Q1212 550 1204 596 Q1190 604 1176 592 L1100 592 Q1084 604 1068 598Z" fill="#855840"/>
   <path d="M1084 560 Q1080 520 1094 500 L1110 490 Q1098 520 1100 560Z" fill="#a06a4e"/>
   <path d="M1180 500 Q1196 520 1194 560 L1184 580 Q1186 540 1176 510Z" fill="#96624a"/>
   </g>
   <g filter="url(#bl2)">
   <path d="M1098 545 Q1096 488 1138 480 Q1180 488 1178 545 Q1178 582 1160 598 Q1138 610 1116 598 Q1098 582 1098 545Z" fill="url(#face2)"/>
   <path d="M1106 536 Q1114 532 1124 536 M1150 536 Q1160 532 1168 536" stroke="#a07a60" stroke-width="1.6" fill="none"/>
   <ellipse cx="1115" cy="543" rx="6" ry="2.6" fill="#7a6a5a"/>
   <ellipse cx="1160" cy="543" rx="6" ry="2.6" fill="#7a6a5a"/>
   <path d="M1132 566 Q1138 572 1144 566" stroke="#d0a080" stroke-width="1.5" fill="none"/>
   <path d="M1126 580 Q1138 577 1150 580" stroke="#c08878" stroke-width="2" fill="none"/>
   <path d="M1112 590 Q1138 612 1164 590 L1170 622 H1106Z" fill="#e0b494"/>
   </g>
   <path d="M1030 622 Q1050 600 1096 590 Q1108 610 1116 622Z" fill="url(#zebra)" filter="url(#bl1)"/>
   <path d="M1160 622 Q1168 600 1180 590 Q1210 596 1226 612 V622Z" fill="url(#zebra)" filter="url(#bl1)"/>
  </g>
  <rect x="994" y="588" width="28" height="24" rx="4" fill="#2a2020" opacity="0.9"/>
  <g transform="translate(1008,600)" fill="none" stroke="#fff" stroke-linecap="round">
    <rect x="-2.6" y="-7" width="5.2" height="8.4" rx="2.6" fill="#fff" stroke="none"/>
    <path d="M-4.4 -0.6 Q-4.4 4.2 0 4.2 Q4.4 4.2 4.4 -0.6 M0 4.2 V6.8 M-2.2 6.8 H2.2" stroke-width="1"/>
    <path d="M-6.6 -6.8 L6.6 6.6" stroke="#2a2020" stroke-width="2.6"/>
    <path d="M-6.6 -6.8 L6.6 6.6" stroke-width="1"/>
  </g>
</svg>

<div class="a" style="left:0;top:663px;width:191px;height:4px;background:#777;border-radius:0 3px 0 0"></div>
</body></html>
